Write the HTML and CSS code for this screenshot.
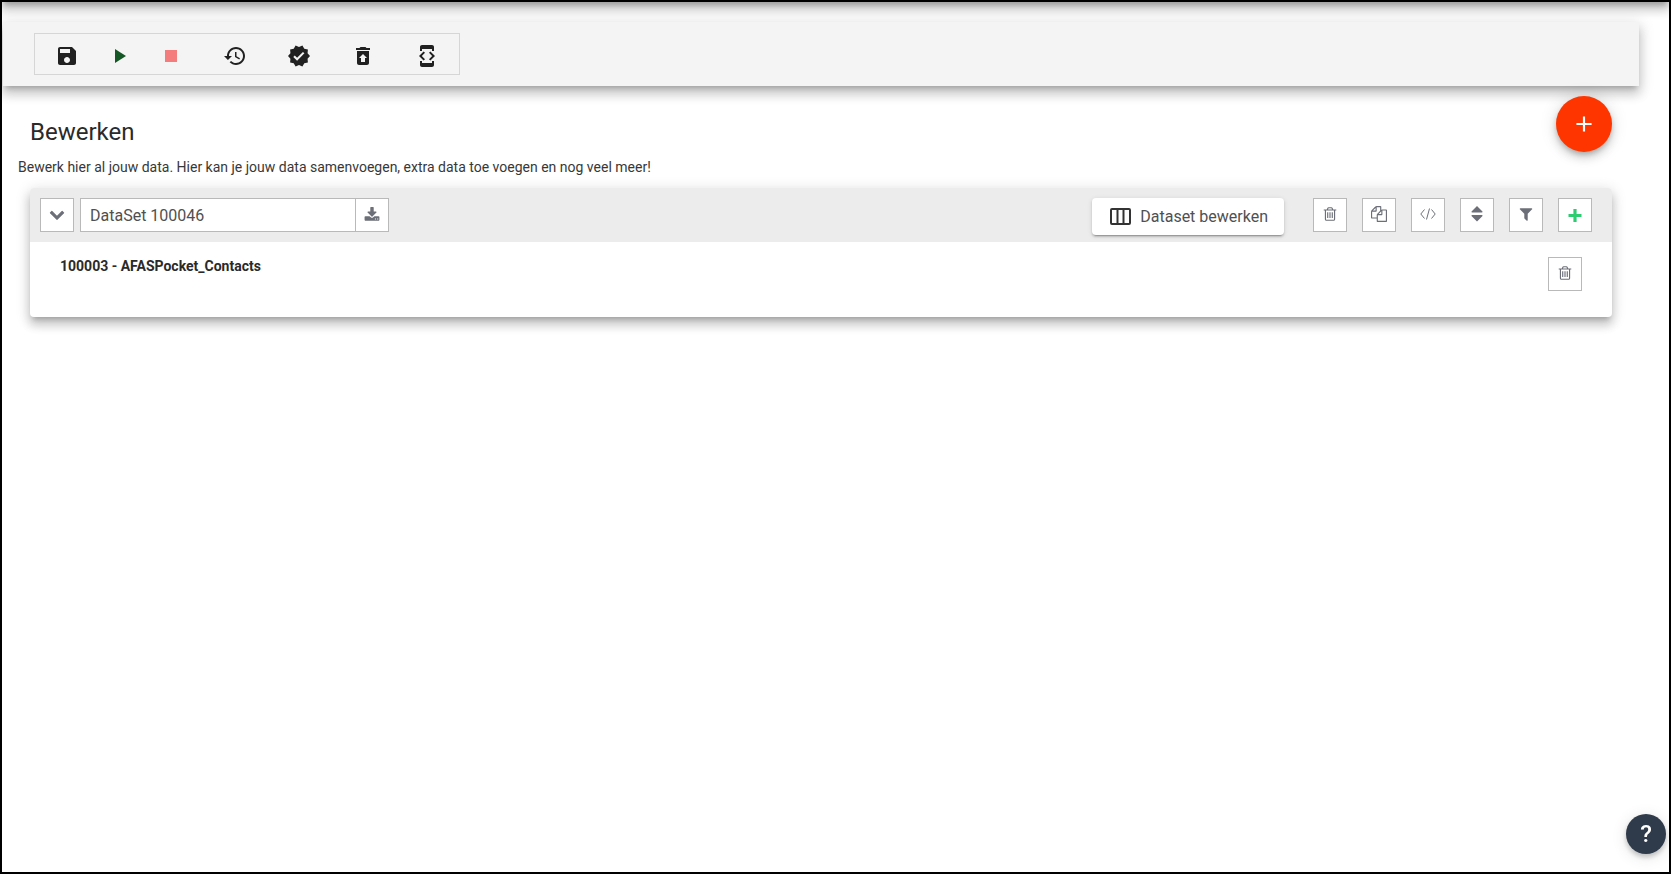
FILE: index.html
```html
<!DOCTYPE html>
<html lang="nl">
<head>
<meta charset="utf-8">
<title>Bewerken</title>
<link rel="stylesheet" href="styles.css">
</head>
<body>
<div class="app">
  <header class="toolbar">
    <div class="toolbar-group">
      <button class="tool" aria-label="Opslaan"><svg viewBox="0 0 24 24"><path d="M17 3H5c-1.110 0-2 .9-2 2v14c0 1.100.89 2 2 2h14c1.100 0 2-.9 2-2V7l-4-4zm-5 16c-1.660 0-3-1.340-3-3s1.340-3 3-3 3 1.340 3 3-1.340 3-3 3zm3-10H5V5h10v4z"/></svg></button>
      <button class="tool tool-run" aria-label="Starten"><svg viewBox="0 0 24 24"><path d="M8 5v14l11-7z"/></svg></button>
      <button class="tool tool-stop" aria-label="Stoppen"><svg viewBox="0 0 24 24"><path d="M6 6h12v12H6z"/></svg></button>
      <button class="tool" aria-label="Geschiedenis"><svg viewBox="0 0 24 24"><path d="M13 3c-4.970 0-9 4.030-9 9H1l3.890 3.890.07.14L9 12H6c0-3.870 3.130-7 7-7s7 3.130 7 7-3.130 7-7 7c-1.930 0-3.680-.79-4.940-2.060l-1.420 1.420C8.270 19.990 10.510 21 13 21c4.970 0 9-4.030 9-9s-4.030-9-9-9zm-1 5v5l4.280 2.540.72-1.210-3.500-2.080V8H12z"/></svg></button>
      <button class="tool" aria-label="Valideren"><svg viewBox="0 0 24 24"><path d="M23 12l-2.440-2.790.34-3.690-3.610-.82-1.890-3.200L12 2.960 8.600 1.500 6.710 4.690 3.100 5.500l.34 3.700L1 12l2.440 2.790-.34 3.700 3.610.82L8.600 22.500l3.400-1.470 3.400 1.460 1.890-3.190 3.610-.82-.34-3.690L23 12zm-12.910 4.720l-3.800-3.810 1.480-1.480 2.320 2.330 5.850-5.870 1.480 1.480-7.330 7.350z"/></svg></button>
      <button class="tool" aria-label="Herstellen"><svg viewBox="0 0 24 24"><path d="M19 4h-3.500l-1-1h-5l-1 1H5v2h14V4zM6 7v12c0 1.100.9 2 2 2h8c1.100 0 2-.9 2-2V7H6zm8 7v4h-4v-4H8l4-4 4 4h-2z"/></svg></button>
      <button class="tool" aria-label="Ontwikkelaarsmodus"><svg viewBox="0 0 24 24"><path d="M7 5h10v2h2V3c0-1.100-.9-1.990-2-1.990L7 1c-1.100 0-2 .9-2 2v4h2V5zm8.410 11.590L20 12l-4.590-4.590L14 8.830 17.170 12 14 15.170l1.410 1.420zM10 15.170L6.830 12 10 8.830 8.590 7.410 4 12l4.590 4.590L10 15.170zM17 19H7v-2H5v4c0 1.100.9 2 2 2h10c1.100 0 2-.9 2-2v-4h-2v2z"/></svg></button>
    </div>
  </header>

  <main class="content">
    <div class="page-head">
      <h1 class="title">Bewerken</h1>
      <button class="fab" aria-label="Toevoegen"><svg viewBox="0 0 24 24"><path d="M19 13h-6v6h-2v-6H5v-2h6V5h2v6h6v2z"/></svg></button>
    </div>
    <p class="intro">Bewerk hier al jouw data. Hier kan je jouw data samenvoegen, extra data toe voegen en nog veel meer!</p>

    <section class="card">
      <div class="card-head">
        <button class="square" aria-label="Inklappen"><svg viewBox="0 0 1792 1792"><path d="M1683 808l-742 741q-19 19-45 19t-45-19l-742-741q-19-19-19-45.500t19-45.500l166-165q19-19 45-19t45 19l531 531 531-531q19-19 45-19t45 19l166 165q19 19 19 45.500t-19 45.500z"/></svg></button>
        <div class="name-group">
          <input class="name" type="text" value="DataSet 100046" aria-label="Naam van dataset">
          <button class="square low" aria-label="Naam opslaan"><svg viewBox="0 0 1792 1792"><path d="M1344 1344q0-26-19-45t-45-19-45 19-19 45 19 45 45 19 45-19 19-45zm256 0q0-26-19-45t-45-19-45 19-19 45 19 45 45 19 45-19 19-45zm128-224v320q0 40-28 68t-68 28h-1472q-40 0-68-28t-28-68v-320q0-40 28-68t68-28h465l135 136q58 56 136 56t136-56l136-136h464q40 0 68 28t28 68zm-325-569q17 41-14 70l-448 448q-18 19-45 19t-45-19l-448-448q-31-29-14-70 17-39 59-39h256v-448q0-26 19-45t45-19h256q26 0 45 19t19 45v448h256q42 0 59 39z"/></svg></button>
        </div>
        <div class="actions">
          <button class="edit"><svg viewBox="0 0 21 17"><path d="M2 1h17a1 1 0 0 1 1 1v13a1 1 0 0 1-1 1H2a1 1 0 0 1-1-1V2a1 1 0 0 1 1-1zM7.500 1v15M13.500 1v15"/></svg>Dataset bewerken</button>
          <button class="square" aria-label="Dataset verwijderen"><svg viewBox="0 0 1792 1792"><use href="#trash"/></svg></button>
          <button class="square" aria-label="Kopiëren"><svg viewBox="0 0 1792 1792"><path d="M1696 384q40 0 68 28t28 68v1216q0 40-28 68t-68 28h-960q-40 0-68-28t-28-68v-288h-544q-40 0-68-28t-28-68v-672q0-40 20-88t48-76l408-408q28-28 76-48t88-20h416q40 0 68 28t28 68v328q68-40 128-40h416zm-544 213l-299 299h299v-299zm-640-384l-299 299h299v-299zm196 647l316-316v-416h-384v416q0 40-28 68t-68 28h-416v640h512v-256q0-40 20-88t48-76zm956 804v-1152h-384v416q0 40-28 68t-68 28h-416v640h896z"/></svg></button>
          <button class="square" aria-label="Code"><svg class="line" viewBox="0 0 16 16"><path d="M4.500 3.500L.8 8l3.700 4.500M11.500 3.500L15.200 8l-3.700 4.500M9.500 2.500l-3 11"/></svg></button>
          <button class="square" aria-label="Sorteren"><svg viewBox="0 0 16 16"><path d="M8 0l5.500 5.500q.3.900-.7.900H3.200q-1 0-.7-.9zM8 15.500L2.500 10q-.3-.9.7-.9h9.600q1 0 .7.900z"/></svg></button>
          <button class="square" aria-label="Filteren"><svg viewBox="0 0 1792 1792"><path d="M1595 295q17 41-14 70l-493 493v742q0 42-39 59-13 5-25 5-27 0-45-19l-256-256q-19-19-19-45v-486l-493-493q-31-29-14-70 17-39 59-39h1280q42 0 59 39z"/></svg></button>
          <button class="square low add" aria-label="Bron toevoegen"><svg viewBox="0 0 16 16"><path d="M6.400 2h3.200v4.900h4.900v3.200H9.600V15H6.400v-4.900H1.500V6.900h4.900z"/></svg></button>
        </div>
      </div>
      <div class="card-body">
        <strong class="source">100003 - AFASPocket_Contacts</strong>
        <button class="square" aria-label="Bron verwijderen"><svg viewBox="0 0 1792 1792"><path id="trash" d="M704 736v576q0 14-9 23t-23 9h-64q-14 0-23-9t-9-23v-576q0-14 9-23t23-9h64q14 0 23 9t9 23zm256 0v576q0 14-9 23t-23 9h-64q-14 0-23-9t-9-23v-576q0-14 9-23t23-9h64q14 0 23 9t9 23zm256 0v576q0 14-9 23t-23 9h-64q-14 0-23-9t-9-23v-576q0-14 9-23t23-9h64q14 0 23 9t9 23zm128 724v-948h-896v948q0 22 7 40.500t14.500 27 10.500 8.500h832q3 0 10.500-8.500t14.500-27 7-40.500zm-672-1076h448l-48-117q-7-9-17-11h-317q-10 2-17 11zm928 32v64q0 14-9 23t-23 9h-96v948q0 83-47 143.500t-113 60.500h-832q-66 0-113-58.500t-47-141.500v-952h-96q-14 0-23-9t-9-23v-64q0-14 9-23t23-9h309l70-167q15-37 54-63t79-26h320q40 0 79 26t54 63l70 167h309q14 0 23 9t9 23z"/></svg></button>
      </div>
    </section>
  </main>

  <button class="help" aria-label="Help">?</button>
</div>
</body>
</html>
```
FILE: styles.css
```css
* { box-sizing: border-box; }

body {
  margin: 0;
  font-family: Roboto, "Liberation Sans", sans-serif;
  font-size: 14px;
  color: #2a2a2a;
  background: #fff;
}

button {
  display: flex;
  align-items: center;
  justify-content: center;
  flex: none;
  padding: 0;
  border: 0;
  font-family: inherit;
  cursor: pointer;
}

svg { display: block; fill: currentColor; }

.app {
  position: relative;
  overflow: hidden;
  min-height: 100vh;
  padding-top: 20px;
  border: 2px solid #000;
}

/* shadow cast by the bar scrolled out above the page */
.app::before {
  content: "";
  position: absolute;
  top: -20px;
  left: 0;
  right: 0;
  height: 20px;
  box-shadow: 0 5px 5px -2px rgba(0, 0, 0, .2), 0 8px 10px 1px rgba(0, 0, 0, .14), 0 3px 14px 2px rgba(0, 0, 0, .12);
}

.toolbar {
  display: flex;
  margin: 0 30px 0 1px;
  padding: 11px 31px;
  background: #f4f4f4;
  box-shadow: 0 5px 5px -3px rgba(0, 0, 0, .2), 0 8px 10px 1px rgba(0, 0, 0, .14), 0 3px 14px 2px rgba(0, 0, 0, .12);
  position: relative;
}

.toolbar-group {
  display: flex;
  height: 42px;
  padding-top: 4px;
  border: 1px solid #d6d6d6;
}

.tool {
  width: 64px;
  background: none;
  color: #212121;
}

.tool svg { width: 24px; height: 24px; }
.tool-run { width: 40px; color: #155724; }
.tool-stop { color: #f47c7c; }

.content { padding: 10px 57px 0 28px; }

.page-head {
  display: flex;
  justify-content: space-between;
  align-items: flex-start;
}

.title {
  margin: 20px 0 0;
  font-size: 24px;
  line-height: 32px;
  font-weight: 400;
}

.fab {
  position: relative;
  width: 56px;
  height: 56px;
  border-radius: 50%;
  background: #ff3500;
  color: #fff;
  box-shadow: 0 3px 5px -1px rgba(0, 0, 0, .2), 0 6px 10px rgba(0, 0, 0, .14), 0 1px 18px rgba(0, 0, 0, .12);
}

.fab svg { width: 26px; height: 26px; }

.intro {
  margin: 5px 0 11px -12px;
  font-size: 14px;
  line-height: 20px;
  color: #383838;
}

.card {
  overflow: hidden;
  border-radius: 4px;
  background: #fff;
  box-shadow: 0 5px 5px -3px rgba(0, 0, 0, .2), 0 8px 10px 1px rgba(0, 0, 0, .14), 0 3px 14px 2px rgba(0, 0, 0, .12);
}

.card-head {
  display: flex;
  align-items: flex-start;
  gap: 6px;
  height: 54px;
  padding: 10px 20px 0 10px;
  background: #ececec;
}

.square {
  width: 34px;
  height: 34px;
  padding-bottom: 2px;
  border: 1px solid #b9b9b9;
  background: #fff;
  color: #6c6f78;
}

.square svg { width: 16px; height: 16px; }
.square .line { fill: none; stroke: currentColor; stroke-width: 1; }
.square.low { padding-bottom: 0; }
.square.add { color: #2ecc71; }

.name-group { display: flex; }

.name {
  width: 275px;
  height: 34px;
  padding: 0 9px;
  border: 1px solid #b9b9b9;
  border-right: 0;
  background: #fff;
  color: #505050;
  font-family: inherit;
  font-size: 16px;
}

.actions {
  display: flex;
  gap: 15px;
  margin-left: auto;
}

.edit {
  gap: 9px;
  height: 37px;
  margin-right: 14px;
  padding: 0 16px 0 18px;
  border-radius: 4px;
  background: #fff;
  color: #505050;
  font-size: 16px;
  box-shadow: 0 3px 1px -2px rgba(0, 0, 0, .2), 0 2px 2px rgba(0, 0, 0, .14), 0 1px 5px rgba(0, 0, 0, .12);
}

.edit svg { width: 21px; height: 17px; fill: none; stroke: #333; stroke-width: 2; }

.card-body {
  display: flex;
  justify-content: space-between;
  align-items: flex-start;
  min-height: 75px;
  padding: 15px 30px;
}

.source { font-size: 14px; line-height: 18px; }

.help {
  position: fixed;
  right: 5px;
  bottom: 20px;
  width: 40px;
  height: 40px;
  border-radius: 50%;
  background: #2f3b4a;
  color: #fff;
  font-size: 24px;
  font-weight: 500;
  box-shadow: 0 3px 5px rgba(0, 0, 0, .2), 0 3px 16px rgba(0, 0, 0, .12);
}
```
